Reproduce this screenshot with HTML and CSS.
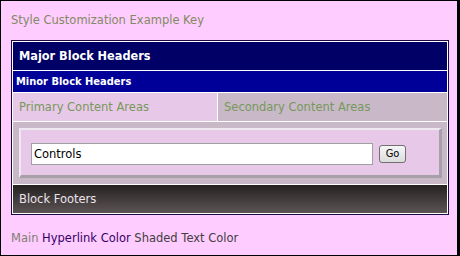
FILE: index.html
```html
<!DOCTYPE html>
<html>
<head>
<meta charset="utf-8">
<link rel="stylesheet" href="styles.css">
</head>
<body>
<div class="frame">
  <div class="title">Style Customization Example Key</div>
  <div class="block">
    <div class="inner">
      <div class="major">Major Block Headers</div>
      <div class="minor">Minor Block Headers</div>
      <div class="content-row">
        <div class="primary">Primary Content Areas</div>
        <div class="secondary">Secondary Content Areas</div>
      </div>
      <div class="controls-area">
        <div class="controls-box">
          <input class="text-input" type="text" value="Controls">
          <button class="go">Go</button>
        </div>
      </div>
      <div class="footer">Block Footers</div>
    </div>
  </div>
  <div class="legend">
    <span class="main">Main</span>
    <span class="link">Hyperlink Color</span>
    <span class="shaded">Shaded Text Color</span>
  </div>
</div>
</body>
</html>
```

FILE: styles.css
```css
html, body {
  margin: 0;
  padding: 0;
}
body {
  width: 460px;
  height: 256px;
  overflow: hidden;
  font-family: "DejaVu Sans", sans-serif;
  font-size: 11.5px;
}
.frame {
  box-sizing: border-box;
  width: 460px;
  height: 256px;
  background: #ffccff;
  border-left: 1px solid #000;
  border-top: 1px solid #000;
  border-right: 3px solid #000;
  border-bottom: 1px solid #000;
  padding: 0 0 0 10px;
}
.title {
  color: #7f8a62;
  line-height: 14px;
  padding-top: 12px;
  height: 27px;
}
.block {
  width: 436px;
  border: 1px solid #1a0a40;
}
.inner {
  border: 1px solid #fff;
  display: flex;
  flex-direction: column;
  gap: 1px;
  background: #fff;
}
.major {
  background: #000066;
  color: #fff;
  font-family: "DejaVu Sans Condensed", "DejaVu Sans", sans-serif;
  font-weight: bold;
  font-size: 12.6px;
  height: 28px;
  line-height: 28px;
  padding-left: 6px;
}
.minor {
  background: #000099;
  color: #fff;
  font-family: "DejaVu Sans Condensed", "DejaVu Sans", sans-serif;
  font-weight: bold;
  font-size: 11px;
  height: 21px;
  line-height: 21px;
  padding-left: 3px;
}
.content-row {
  display: flex;
  gap: 1px;
  height: 28px;
}
.primary, .secondary {
  color: #76985a;
  line-height: 28px;
  padding-left: 6px;
}
.primary {
  background: #e8c8e8;
  width: 198px;
}
.secondary {
  background: #c8b8c8;
  flex: 1;
}
.controls-area {
  background: #c8b8c8;
  height: 62px;
  padding: 6px 5px 0 6px;
  box-sizing: border-box;
}
.controls-box {
  box-sizing: border-box;
  height: 50px;
  background: #e8c8e8;
  border-top: 2px solid #f0e8f0;
  border-left: 2px solid #f0e8f0;
  border-right: 3px solid #a8a0a8;
  border-bottom: 3px solid #a8a0a8;
  display: flex;
  align-items: center;
  padding-left: 10px;
  gap: 6px;
}
.text-input {
  box-sizing: border-box;
  width: 342px;
  height: 22px;
  border: 1px solid #a0a0a0;
  background: #fff;
  font-family: "DejaVu Sans", sans-serif;
  font-size: 11.5px;
  color: #000;
  padding: 0 2px;
  margin: 2px 0 0 0;
  outline: none;
}
.go {
  box-sizing: border-box;
  width: 27px;
  height: 18px;
  border: 1px solid #707070;
  border-radius: 3px;
  background: linear-gradient(#f6f6f6, #dcdcdc);
  font-family: "DejaVu Sans Condensed", "DejaVu Sans", sans-serif;
  font-size: 11px;
  color: #000;
  padding: 0;
  margin-top: 2px;
}
.footer {
  height: 28px;
  line-height: 29px;
  padding-left: 6px;
  color: #ece4ec;
  background: linear-gradient(#262222, #5c5454);
}
.legend {
  padding-top: 16px;
  line-height: 14px;
}
.main { color: #7f8070; }
.link { color: #330066; }
.shaded { color: #404040; }
```
